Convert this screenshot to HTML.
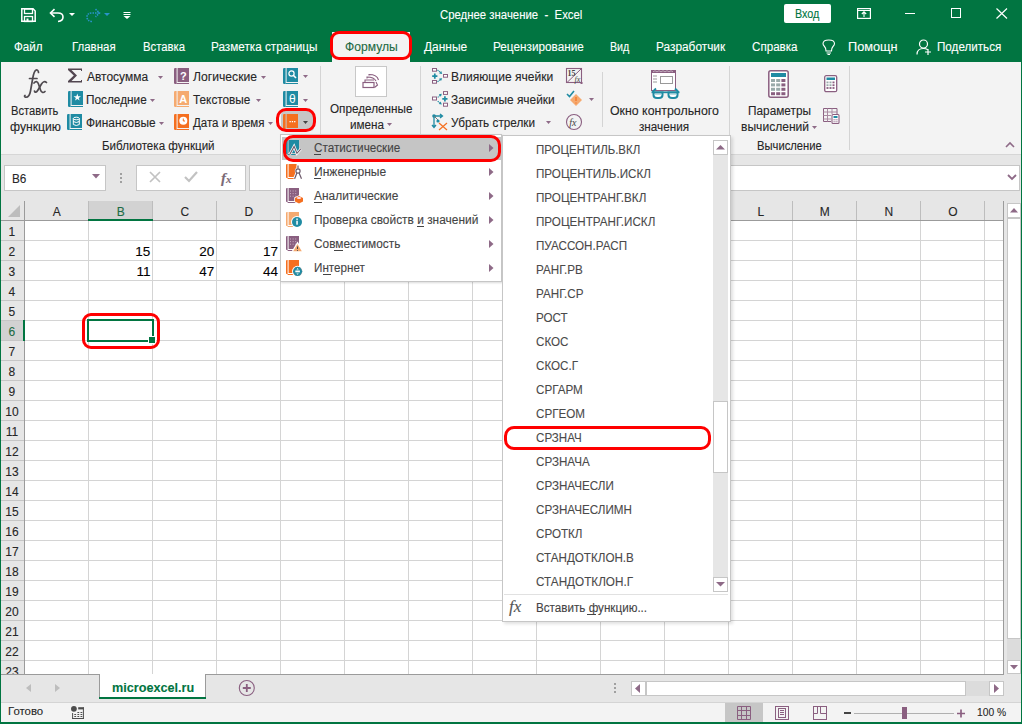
<!DOCTYPE html>
<html><head><meta charset="utf-8"><style>
html,body{margin:0;padding:0;width:1022px;height:724px;overflow:hidden;background:#fff;position:relative}
body{font-family:"Liberation Sans",sans-serif}
.t{position:absolute;white-space:pre;line-height:1;transform-origin:0 0;-webkit-text-stroke:0.1px currentColor}
</style></head><body>
<div style="position:absolute;left:0px;top:0px;width:1022px;height:62px;background:#017541"></div>
<div class="t" style="left:440.30px;top:9.04px;font-size:12px;color:#fff;transform:scaleX(0.9480);">Среднее значение  -  Excel</div>
<div style="position:absolute;left:784px;top:4px;width:47px;height:19px;background:#fff;border-radius:2px"></div>
<div class="t" style="left:795.40px;top:8.34px;font-size:12px;color:#017541;transform:scaleX(0.8989);">Вход</div>
<svg style="position:absolute;left:21px;top:8px;overflow:visible;" width="15" height="14" viewBox="0 0 15 14"><path d="M0.8,0.8 H12 L14.2,3 V13.2 H0.8Z" fill="none" stroke="#fff" stroke-width="1.5"/><rect x="3.5" y="1" width="8" height="4.5" fill="none" stroke="#fff" stroke-width="1.3"/><rect x="3.5" y="8.5" width="8" height="5" fill="none" stroke="#fff" stroke-width="1.3"/><rect x="5.5" y="10.5" width="2" height="2.5" fill="#fff"/></svg>
<svg style="position:absolute;left:49px;top:8px;overflow:visible;" width="16" height="14" viewBox="0 0 16 14"><path d="M2,5 H9 Q14,5 14,9 Q14,13 9,13.5" fill="none" stroke="#fff" stroke-width="1.6"/><path d="M5.5,1.2 L1.5,5 L5.5,8.8" fill="none" stroke="#fff" stroke-width="1.6"/></svg>
<svg style="position:absolute;left:69px;top:13px;overflow:visible;" width="6" height="3" viewBox="0 0 6 3"><path d="M0,0 H6 L3,3Z" fill="#fff"/></svg>
<svg style="position:absolute;left:85px;top:8px;overflow:visible;" width="16" height="14" viewBox="0 0 16 14"><path d="M14,5 H7 Q2,5 2,9 Q2,13 7,13.5" fill="none" stroke="#2a93c9" stroke-width="1.6" stroke-dasharray="1.5 1"/><path d="M10.5,1.2 L14.5,5 L10.5,8.8" fill="none" stroke="#2a93c9" stroke-width="1.6" stroke-dasharray="1.5 1"/></svg>
<svg style="position:absolute;left:104px;top:13px;overflow:visible;" width="6" height="3" viewBox="0 0 6 3"><path d="M0,0 H6 L3,3Z" fill="#2a93c9"/></svg>
<svg style="position:absolute;left:123px;top:11px;overflow:visible;" width="8" height="8" viewBox="0 0 8 8"><path d="M0.5,1.5 H7.5 M0.5,3.5 H7.5" stroke="#fff" stroke-width="1" fill="none"/><path d="M0.5,5 H7.5 L4,8Z" fill="#fff"/></svg>
<svg style="position:absolute;left:857px;top:8px;overflow:visible;" width="14" height="11" viewBox="0 0 14 11"><rect x="0.6" y="0.6" width="12.8" height="9.8" fill="none" stroke="#fff" stroke-width="1.2"/><path d="M0.6,2.5 H13.4" stroke="#fff" stroke-width="1"/><path d="M7,9 V4 M4.8,6 L7,3.8 L9.2,6" stroke="#fff" stroke-width="1.1" fill="none"/></svg>
<div style="position:absolute;left:905px;top:13px;width:10px;height:1px;background:#fff"></div>
<div style="position:absolute;left:951px;top:8px;width:10px;height:10px;border:1px solid #fff;box-sizing:border-box"></div>
<svg style="position:absolute;left:996px;top:8px;overflow:visible;" width="12" height="11" viewBox="0 0 12 11"><path d="M0.5,0.5 L11,10.5 M11,0.5 L0.5,10.5" stroke="#fff" stroke-width="1.2"/></svg>
<svg style="position:absolute;left:822px;top:39px;overflow:visible;" width="14" height="16" viewBox="0 0 14 16"><path d="M4,12 Q4,9 2.5,7.5 Q1,6 1,4.8 Q1,1 6.8,1 Q12.5,1 12.5,4.8 Q12.5,6 11,7.5 Q9.5,9 9.5,12Z M4.5,14 H9 M5.5,15.5 H8" fill="none" stroke="#fff" stroke-width="1.1"/></svg>
<svg style="position:absolute;left:916px;top:39px;overflow:visible;" width="17" height="16" viewBox="0 0 17 16"><circle cx="7.5" cy="5" r="4" fill="none" stroke="#fff" stroke-width="1.2"/><path d="M1,15.5 Q1,9.5 7.5,9.5 Q10,9.5 11.5,10.5 M12,10 V16 M9,13 H15" fill="none" stroke="#fff" stroke-width="1.2"/></svg>
<div class="t" style="left:14.00px;top:41.34px;font-size:12px;color:#fff;transform:scaleX(0.9692);">Файл</div>
<div class="t" style="left:72.20px;top:41.34px;font-size:12px;color:#fff;transform:scaleX(0.9546);">Главная</div>
<div class="t" style="left:143.00px;top:41.34px;font-size:12px;color:#fff;transform:scaleX(0.9414);">Вставка</div>
<div class="t" style="left:211.20px;top:41.34px;font-size:12px;color:#fff;transform:scaleX(0.9783);">Разметка страницы</div>
<div class="t" style="left:424.00px;top:41.34px;font-size:12px;color:#fff;transform:scaleX(0.9964);">Данные</div>
<div class="t" style="left:493.20px;top:41.34px;font-size:12px;color:#fff;transform:scaleX(0.9799);">Рецензирование</div>
<div class="t" style="left:610.30px;top:41.34px;font-size:12px;color:#fff;transform:scaleX(0.8891);">Вид</div>
<div class="t" style="left:656.20px;top:41.34px;font-size:12px;color:#fff;transform:scaleX(0.9880);">Разработчик</div>
<div class="t" style="left:752.40px;top:41.34px;font-size:12px;color:#fff;transform:scaleX(0.9684);">Справка</div>
<div class="t" style="left:848.20px;top:41.34px;font-size:12px;color:#fff;transform:scaleX(1.0615);">Помощн</div>
<div class="t" style="left:936.50px;top:41.34px;font-size:12px;color:#fff;transform:scaleX(0.9704);">Поделиться</div>
<div style="position:absolute;left:332px;top:32px;width:78px;height:30px;background:#f3f3f3"></div>
<div class="t" style="left:344.50px;top:41.34px;font-size:12px;color:#1d6a43;transform:scaleX(1.0110);">Формулы</div>
<div style="position:absolute;left:1px;top:62px;width:1020px;height:93px;background:#f3f3f3"></div>
<div style="position:absolute;left:1px;top:154px;width:1020px;height:48px;background:#e6e6e6"></div>
<div style="position:absolute;left:1px;top:154px;width:1020px;height:1px;background:#d6d6d6"></div>
<div class="t" style="left:11.30px;top:105.14px;font-size:12px;color:#262626;transform:scaleX(0.9299);">Вставить</div>
<div class="t" style="left:9.70px;top:120.84px;font-size:12px;color:#262626;transform:scaleX(1.0160);">функцию</div>
<div class="t" style="left:86.50px;top:70.84px;font-size:12px;color:#262626;transform:scaleX(0.9984);">Автосумма</div>
<div class="t" style="left:86.30px;top:93.84px;font-size:12px;color:#262626;transform:scaleX(0.9835);">Последние</div>
<div class="t" style="left:86.30px;top:116.84px;font-size:12px;color:#262626;transform:scaleX(0.9924);">Финансовые</div>
<div class="t" style="left:193.30px;top:70.84px;font-size:12px;color:#262626;transform:scaleX(1.0130);">Логические</div>
<div class="t" style="left:193.30px;top:93.84px;font-size:12px;color:#262626;transform:scaleX(0.9824);">Текстовые</div>
<div class="t" style="left:193.30px;top:116.84px;font-size:12px;color:#262626;transform:scaleX(0.9609);">Дата и время</div>
<div class="t" style="left:102.30px;top:140.14px;font-size:12px;color:#262626;transform:scaleX(0.9667);">Библиотека функций</div>
<div class="t" style="left:329.50px;top:102.54px;font-size:12px;color:#262626;transform:scaleX(0.9773);">Определенные</div>
<div class="t" style="left:349.50px;top:119.04px;font-size:12px;color:#262626;transform:scaleX(0.9758);">имена</div>
<div class="t" style="left:451.20px;top:70.84px;font-size:12px;color:#262626;transform:scaleX(1.0042);">Влияющие ячейки</div>
<div class="t" style="left:451.20px;top:93.84px;font-size:12px;color:#262626;transform:scaleX(0.9898);">Зависимые ячейки</div>
<div class="t" style="left:451.20px;top:116.84px;font-size:12px;color:#262626;transform:scaleX(0.9790);">Убрать стрелки</div>
<div class="t" style="left:609.60px;top:105.14px;font-size:12px;color:#262626;transform:scaleX(1.0290);">Окно контрольного</div>
<div class="t" style="left:639.00px;top:120.94px;font-size:12px;color:#262626;transform:scaleX(0.9749);">значения</div>
<div class="t" style="left:747.60px;top:105.14px;font-size:12px;color:#262626;transform:scaleX(0.9848);">Параметры</div>
<div class="t" style="left:740.50px;top:121.14px;font-size:12px;color:#262626;transform:scaleX(1.0064);">вычислений</div>
<div class="t" style="left:756.80px;top:140.14px;font-size:12px;color:#262626;transform:scaleX(0.9356);">Вычисление</div>
<svg style="position:absolute;left:22px;top:68px;overflow:visible;" width="28" height="32" viewBox="0 0 28 32"><g fill="none" stroke="#4f4a4f" stroke-width="1.7" stroke-linecap="round"><path d="M16.5,4.5 C16.5,2.5 15,1.5 13.8,2.2 C12,3.2 11.5,6 10.8,10 L8.5,23 C7.8,27 6,29.5 3.5,29.2 C2.5,29 2.2,28 3,27.5"/><path d="M7.5,10.5 H15"/><path d="M12,15 C13.5,13 15.5,13 16.5,16 L18.5,22 C19.5,25 21.5,25 23,23.5"/><path d="M24.5,14.5 C23,13 21,13.5 19.5,16 L16,22 C14.5,24.5 13,25 12.5,23"/></g></svg>
<svg style="position:absolute;left:67px;top:68px;overflow:visible;" width="16" height="15" viewBox="0 0 16 15"><path d="M1,0.5 H15 V3 H14 V2 H4.5 L10,7.5 L4.5,13 H14 V12 H15 V14.5 H1 V13 L6.8,7.5 L1,2Z" fill="#524650"/></svg>
<svg style="position:absolute;left:68px;top:91px;overflow:visible;" width="15" height="16" viewBox="0 0 15 16"><path d="M0,1.2 Q0,0 1.2,0 H2.6 V16 H1.2 Q0,16 0,14.8Z" fill="#1f8ba3"/><rect x="3.6" y="0" width="11.4" height="14" fill="#1f8ba3"/><rect x="2.6" y="15" width="12.4" height="1" fill="#1f8ba3"/><path d="M9.3,2.6 L10.2,5.3 H13 L10.7,6.9 L11.6,9.6 L9.3,8 L7,9.6 L7.9,6.9 L5.6,5.3 H8.4Z" fill="#fff"/></svg>
<svg style="position:absolute;left:67px;top:114px;overflow:visible;" width="15" height="16" viewBox="0 0 15 16"><path d="M0,1.2 Q0,0 1.2,0 H2.6 V16 H1.2 Q0,16 0,14.8Z" fill="#1f8ba3"/><rect x="3.6" y="0" width="11.4" height="14" fill="#1f8ba3"/><rect x="2.6" y="15" width="12.4" height="1" fill="#1f8ba3"/><ellipse cx="9.3" cy="4.5" rx="3" ry="1.3" fill="none" stroke="#fff" stroke-width="1"/><path d="M6.3,4.5 V10.5 Q9.3,12.5 12.3,10.5 V4.5 M6.3,7.5 Q9.3,9.5 12.3,7.5" fill="none" stroke="#fff" stroke-width="1"/></svg>
<svg style="position:absolute;left:174px;top:68px;overflow:visible;" width="15" height="16" viewBox="0 0 15 16"><path d="M0,1.2 Q0,0 1.2,0 H2.6 V16 H1.2 Q0,16 0,14.8Z" fill="#8a5f80"/><rect x="3.6" y="0" width="11.4" height="14" fill="#8a5f80"/><rect x="2.6" y="15" width="12.4" height="1" fill="#8a5f80"/><text x="9.3" y="11.5" font-family="Liberation Sans" font-weight="bold" font-size="11" fill="#fff" text-anchor="middle">?</text></svg>
<svg style="position:absolute;left:174px;top:91px;overflow:visible;" width="15" height="16" viewBox="0 0 15 16"><path d="M0,1.2 Q0,0 1.2,0 H2.6 V16 H1.2 Q0,16 0,14.8Z" fill="#f5aa70"/><rect x="3.6" y="0" width="11.4" height="14" fill="#f5aa70"/><rect x="2.6" y="15" width="12.4" height="1" fill="#f5aa70"/><text x="9.3" y="11.5" font-family="Liberation Sans" font-weight="bold" font-size="11" fill="#fff" text-anchor="middle">A</text></svg>
<svg style="position:absolute;left:174px;top:114px;overflow:visible;" width="15" height="16" viewBox="0 0 15 16"><path d="M0,1.2 Q0,0 1.2,0 H2.6 V16 H1.2 Q0,16 0,14.8Z" fill="#f56f1f"/><rect x="3.6" y="0" width="11.4" height="14" fill="#f56f1f"/><rect x="2.6" y="15" width="12.4" height="1" fill="#f56f1f"/><circle cx="9.3" cy="6.8" r="4" fill="#fff"/><path d="M9.3,4.5 V7 H11" stroke="#f56f1f" stroke-width="1" fill="none"/></svg>
<svg style="position:absolute;left:283px;top:68px;overflow:visible;" width="15" height="16" viewBox="0 0 15 16"><path d="M0,1.2 Q0,0 1.2,0 H2.6 V16 H1.2 Q0,16 0,14.8Z" fill="#1f8ba3"/><rect x="3.6" y="0" width="11.4" height="14" fill="#1f8ba3"/><rect x="2.6" y="15" width="12.4" height="1" fill="#1f8ba3"/><circle cx="8.5" cy="5.5" r="2.6" fill="none" stroke="#fff" stroke-width="1.2"/><path d="M10.3,7.3 L13,10" stroke="#fff" stroke-width="1.6"/></svg>
<svg style="position:absolute;left:283px;top:91px;overflow:visible;" width="15" height="16" viewBox="0 0 15 16"><path d="M0,1.2 Q0,0 1.2,0 H2.6 V16 H1.2 Q0,16 0,14.8Z" fill="#1f8ba3"/><rect x="3.6" y="0" width="11.4" height="14" fill="#1f8ba3"/><rect x="2.6" y="15" width="12.4" height="1" fill="#1f8ba3"/><text x="9.3" y="11.8" font-family="Liberation Sans" font-size="12" fill="#fff" text-anchor="middle">θ</text></svg>
<div style="position:absolute;left:281px;top:111px;width:33px;height:20px;background:#c6c6c6;border-radius:4px"></div>
<svg style="position:absolute;left:283px;top:114px;overflow:visible;" width="15" height="16" viewBox="0 0 15 16"><path d="M0,1.2 Q0,0 1.2,0 H2.6 V16 H1.2 Q0,16 0,14.8Z" fill="#f56f1f"/><rect x="3.6" y="0" width="11.4" height="14" fill="#f56f1f"/><rect x="2.6" y="15" width="12.4" height="1" fill="#f56f1f"/><rect x="6.5" y="7" width="1.3" height="1.3" fill="#fff"/><rect x="8.8" y="7" width="1.3" height="1.3" fill="#fff"/><rect x="11.1" y="7" width="1.3" height="1.3" fill="#fff"/></svg>
<svg style="position:absolute;left:158.0px;top:75.5px;overflow:visible;" width="5" height="3.0" viewBox="0 0 5 3.0"><path d="M0,0 H5 L2.5,3.0Z" fill="#8e6a87"/></svg>
<svg style="position:absolute;left:150.0px;top:98.5px;overflow:visible;" width="5" height="3.0" viewBox="0 0 5 3.0"><path d="M0,0 H5 L2.5,3.0Z" fill="#8e6a87"/></svg>
<svg style="position:absolute;left:159.0px;top:121.5px;overflow:visible;" width="5" height="3.0" viewBox="0 0 5 3.0"><path d="M0,0 H5 L2.5,3.0Z" fill="#8e6a87"/></svg>
<svg style="position:absolute;left:260.5px;top:75.5px;overflow:visible;" width="5" height="3.0" viewBox="0 0 5 3.0"><path d="M0,0 H5 L2.5,3.0Z" fill="#8e6a87"/></svg>
<svg style="position:absolute;left:255.5px;top:98.5px;overflow:visible;" width="5" height="3.0" viewBox="0 0 5 3.0"><path d="M0,0 H5 L2.5,3.0Z" fill="#8e6a87"/></svg>
<svg style="position:absolute;left:268.0px;top:121.5px;overflow:visible;" width="5" height="3.0" viewBox="0 0 5 3.0"><path d="M0,0 H5 L2.5,3.0Z" fill="#8e6a87"/></svg>
<svg style="position:absolute;left:303.0px;top:75.0px;overflow:visible;" width="5" height="3.0" viewBox="0 0 5 3.0"><path d="M0,0 H5 L2.5,3.0Z" fill="#8e6a87"/></svg>
<svg style="position:absolute;left:303.0px;top:98.5px;overflow:visible;" width="5" height="3.0" viewBox="0 0 5 3.0"><path d="M0,0 H5 L2.5,3.0Z" fill="#8e6a87"/></svg>
<svg style="position:absolute;left:303.0px;top:121.0px;overflow:visible;" width="5" height="3.0" viewBox="0 0 5 3.0"><path d="M0,0 H5 L2.5,3.0Z" fill="#444"/></svg>
<div style="position:absolute;left:355px;top:66px;width:32px;height:31px;background:#fff;border:1px solid #c8c8c8;box-sizing:border-box"></div>
<svg style="position:absolute;left:362px;top:73px;overflow:visible;" width="18" height="16" viewBox="0 0 18 16"><rect x="1" y="9.5" width="11" height="5" fill="none" stroke="#8a5f80" stroke-width="1.2"/><path d="M3,9 V7 H12 M5,5.5 V4 Q12,4 14,8 M7,2.5 V1.5 Q15,1.5 16.5,7 M14,9 L15.5,12 L12.5,14.5" fill="none" stroke="#8a5f80" stroke-width="1.1"/></svg>
<svg style="position:absolute;left:387.2px;top:122.5px;overflow:visible;" width="5" height="3.0" viewBox="0 0 5 3.0"><path d="M0,0 H5 L2.5,3.0Z" fill="#8e6a87"/></svg>
<svg style="position:absolute;left:431px;top:68px;overflow:visible;" width="18" height="16" viewBox="0 0 18 16"><rect x="1.5" y="0.5" width="4" height="2.7" fill="#fff" stroke="#8a5f80" stroke-width="1"/><rect x="1.5" y="12.5" width="4" height="2.7" fill="#fff" stroke="#8a5f80" stroke-width="1"/><rect x="12.5" y="6.5" width="4" height="2.7" fill="#fff" stroke="#8a5f80" stroke-width="1"/><path d="M1.1999999999999997,8.1 H6.4 M3.8,5.5 V10.7" stroke="#1f8ba3" stroke-width="1.7"/><path d="M6.5,2 L9.20,4.24" stroke="#1f8ba3" stroke-width="1.1" stroke-dasharray="1.3 0.7"/><path d="M11.2,5.9 L8.18,5.47 L10.22,3.01Z" fill="#1f8ba3"/><path d="M6.5,13.7 L9.09,11.82" stroke="#1f8ba3" stroke-width="1.1" stroke-dasharray="1.3 0.7"/><path d="M11.2,10.3 L10.03,13.12 L8.16,10.53Z" fill="#1f8ba3"/></svg>
<svg style="position:absolute;left:431px;top:91px;overflow:visible;" width="18" height="17" viewBox="0 0 18 17"><rect x="1.5" y="6" width="4" height="3" fill="#fff" stroke="#8a5f80" stroke-width="1"/><rect x="12.5" y="0.6" width="4" height="2.8" fill="#fff" stroke="#8a5f80" stroke-width="1"/><rect x="12.5" y="12.2" width="4" height="3" fill="#fff" stroke="#8a5f80" stroke-width="1"/><path d="M11.3,7.8 H16.5 M13.9,5.199999999999999 V10.4" stroke="#1f8ba3" stroke-width="1.7"/><path d="M6.7,6.4 L8.85,4.52" stroke="#1f8ba3" stroke-width="1.1" stroke-dasharray="1.3 0.7"/><path d="M10.8,2.8 L9.90,5.72 L7.79,3.31Z" fill="#1f8ba3"/><path d="M6.7,10.2 L8.75,11.80" stroke="#1f8ba3" stroke-width="1.1" stroke-dasharray="1.3 0.7"/><path d="M10.8,13.4 L7.77,13.06 L9.73,10.54Z" fill="#1f8ba3"/></svg>
<svg style="position:absolute;left:431px;top:113px;overflow:visible;" width="18" height="18" viewBox="0 0 18 18"><circle cx="3" cy="3" r="1.8" fill="#1f8ba3"/><path d="M3,3 H11 M9,1 L11.5,3 L9,5 M3,3 V14 M1,12 L3,14.5 L5,12" stroke="#1f8ba3" stroke-width="1.3" fill="none"/><path d="M3,3 L7,7" stroke="#777" stroke-width="1"/><circle cx="7" cy="8" r="1.6" fill="#1f8ba3"/><path d="M8,10 L16,17 M16,10 L8,17" stroke="#f56f1f" stroke-width="1.2"/></svg>
<svg style="position:absolute;left:546.0px;top:120.5px;overflow:visible;" width="5" height="3.0" viewBox="0 0 5 3.0"><path d="M0,0 H5 L2.5,3.0Z" fill="#8e6a87"/></svg>
<svg style="position:absolute;left:566px;top:68px;overflow:visible;" width="17" height="17" viewBox="0 0 17 17"><rect x="0.5" y="0.5" width="15" height="14" fill="none" stroke="#8a5f80" stroke-width="1.1"/><path d="M15,1 L1,14.5" stroke="#8a5f80" stroke-width="1"/><text x="1.5" y="8" font-family="Liberation Serif" font-weight="bold" font-size="8" fill="#444">15</text><text x="8.5" y="13.5" font-family="Liberation Serif" font-style="italic" font-size="8" fill="#444">fx</text><rect x="14.5" y="14" width="2" height="2" fill="#8a5f80"/></svg>
<svg style="position:absolute;left:566px;top:90px;overflow:visible;" width="17" height="17" viewBox="0 0 17 17"><path d="M1,4 L3.5,6.5 L8,1" stroke="#1f8ba3" stroke-width="1.6" fill="none"/><path d="M10,4 L16,10 L10,16 L4,10Z" fill="#f5aa70"/><path d="M10,7 V11 M10,12.5 V13.5" stroke="#f56f1f" stroke-width="1.2"/></svg>
<svg style="position:absolute;left:588.5px;top:98.0px;overflow:visible;" width="5" height="3.0" viewBox="0 0 5 3.0"><path d="M0,0 H5 L2.5,3.0Z" fill="#8e6a87"/></svg>
<svg style="position:absolute;left:566px;top:114px;overflow:visible;" width="17" height="17" viewBox="0 0 17 17"><circle cx="8" cy="8" r="7.5" fill="none" stroke="#8a5f80" stroke-width="1.1"/><text x="3.2" y="11.8" font-family="Liberation Serif" font-style="italic" font-size="10" fill="#444">fx</text></svg>
<svg style="position:absolute;left:651px;top:70px;overflow:visible;" width="30" height="30" viewBox="0 0 30 30"><rect x="0.5" y="0.5" width="24" height="20" fill="#fff" stroke="#8a5f80" stroke-width="1"/><rect x="0" y="0" width="25" height="3" fill="#8a5f80"/><path d="M2,1.8 L4,0.8 L6,1.8 L8,0.8 L10,1.8 L12,0.8 L14,1.8 L16,0.8 L18,1.8 L20,0.8 L22,1.8" stroke="#d9c9d4" stroke-width="0.7" fill="none"/><path d="M2,6 H6 M2,9 H6 M2,12 H6" stroke="#999" stroke-width="1"/><rect x="9.5" y="6.5" width="12" height="7" fill="none" stroke="#999" stroke-width="1"/><path d="M1.5,22 L5,18.5 M27.5,22 L24,18.5" stroke="#1f8ba3" stroke-width="1.8" fill="none"/><path d="M0.5,22.3 H28.5" stroke="#1f8ba3" stroke-width="1.8"/><path d="M1.5,21.5 H12.5 V25 Q12.5,29 8,29 H6 Q1.5,29 1.5,25Z M16.5,21.5 H27.5 V25 Q27.5,29 23,29 H21 Q16.5,29 16.5,25Z" fill="#1f8ba3"/><path d="M3.5,23.5 H10.5 V25 Q10.5,27 8,27 H6 Q3.5,27 3.5,25Z M18.5,23.5 H25.5 V25 Q25.5,27 23,27 H21 Q18.5,27 18.5,25Z" fill="#fff"/><path d="M4.5,24.5 H9.5 M19.5,24.5 H24.5" stroke="#1f8ba3" stroke-width="0.6" stroke-dasharray="1 1"/></svg>
<svg style="position:absolute;left:768px;top:70px;overflow:visible;" width="22" height="28" viewBox="0 0 22 28"><rect x="0.8" y="0.8" width="19.4" height="26.4" rx="2" fill="#fff" stroke="#8a5f80" stroke-width="1.5"/><rect x="3" y="3" width="15" height="4" fill="#1f8ba3"/><rect x="3.0" y="9.0" width="4" height="3" fill="#9aa"/><rect x="3.0" y="13.4" width="4" height="3" fill="#9aa"/><rect x="3.0" y="17.8" width="4" height="3" fill="#9aa"/><rect x="3.0" y="22.200000000000003" width="4" height="3" fill="#8a5f80"/><rect x="8.2" y="9.0" width="4" height="3" fill="#9aa"/><rect x="8.2" y="13.4" width="4" height="3" fill="#9aa"/><rect x="8.2" y="17.8" width="4" height="3" fill="#9aa"/><rect x="8.2" y="22.200000000000003" width="4" height="3" fill="#8a5f80"/><rect x="13.4" y="9.0" width="4" height="3" fill="#8a5f80"/><rect x="13.4" y="13.4" width="4" height="3" fill="#8a5f80"/><rect x="13.4" y="17.8" width="4" height="3" fill="#8a5f80"/><rect x="13.4" y="22.200000000000003" width="4" height="3" fill="#8a5f80"/></svg>
<svg style="position:absolute;left:824px;top:75px;overflow:visible;" width="14" height="18" viewBox="0 0 14 18"><rect x="0.7" y="0.7" width="12" height="16" rx="1.5" fill="#fff" stroke="#8a5f80" stroke-width="1.3"/><rect x="2.5" y="2.5" width="8.5" height="2.5" fill="#1f8ba3"/><rect x="2.5" y="6.5" width="2" height="1.8" fill="#9aa"/><rect x="2.5" y="9.3" width="2" height="1.8" fill="#9aa"/><rect x="2.5" y="12.1" width="2" height="1.8" fill="#8a5f80"/><rect x="5.5" y="6.5" width="2" height="1.8" fill="#9aa"/><rect x="5.5" y="9.3" width="2" height="1.8" fill="#9aa"/><rect x="5.5" y="12.1" width="2" height="1.8" fill="#8a5f80"/><rect x="8.5" y="6.5" width="2" height="1.8" fill="#8a5f80"/><rect x="8.5" y="9.3" width="2" height="1.8" fill="#8a5f80"/><rect x="8.5" y="12.1" width="2" height="1.8" fill="#8a5f80"/></svg>
<svg style="position:absolute;left:823px;top:108px;overflow:visible;" width="17" height="16" viewBox="0 0 17 16"><path d="M0.5,0.5 H14 V6 M0.5,0.5 V13.5 H8" fill="none" stroke="#8a5f80" stroke-width="1"/><path d="M0.5,4 H14 M0.5,7.5 H8 M0.5,11 H8 M4.5,0.5 V13.5 M9,0.5 V6" stroke="#a98aa1" stroke-width="1"/><rect x="9" y="6.5" width="7" height="9" rx="1" fill="#fff" stroke="#8a5f80" stroke-width="1.1"/><rect x="10.5" y="8" width="4" height="2" fill="#1f8ba3"/><path d="M10.5,11.8 H15 M10.5,13.8 H15" stroke="#8a5f80" stroke-width="1" stroke-dasharray="1.2 0.8"/></svg>
<svg style="position:absolute;left:812.1px;top:125.5px;overflow:visible;" width="5" height="3.0" viewBox="0 0 5 3.0"><path d="M0,0 H5 L2.5,3.0Z" fill="#8e6a87"/></svg>
<svg style="position:absolute;left:1005px;top:142px;overflow:visible;" width="10" height="6" viewBox="0 0 10 6"><path d="M1,5 L5,1 L9,5" stroke="#8e6a87" stroke-width="1.6" fill="none"/></svg>
<div style="position:absolute;left:320px;top:66px;width:1px;height:84px;background:#d4d4d4"></div>
<div style="position:absolute;left:420px;top:66px;width:1px;height:84px;background:#d4d4d4"></div>
<div style="position:absolute;left:602px;top:72px;width:1px;height:55px;background:#d4d4d4"></div>
<div style="position:absolute;left:729px;top:66px;width:1px;height:84px;background:#d4d4d4"></div>
<div style="position:absolute;left:849px;top:66px;width:1px;height:84px;background:#d4d4d4"></div>
<div style="position:absolute;left:4px;top:165px;width:102px;height:26px;background:#fff;border:1px solid #c6c6c6;box-sizing:border-box"></div>
<div class="t" style="left:11.60px;top:173.34px;font-size:12px;color:#262626;transform:scaleX(0.9812);">B6</div>
<div style="position:absolute;left:136px;top:165px;width:110px;height:26px;background:#fff;border:1px solid #c6c6c6;box-sizing:border-box"></div>
<div style="position:absolute;left:249px;top:165px;width:771px;height:26px;background:#fff;border:1px solid #c6c6c6;box-sizing:border-box"></div>
<div style="position:absolute;left:1px;top:201px;width:1003px;height:19px;background:#e6e6e6"></div>
<div style="position:absolute;left:25px;top:220px;width:979px;height:454px;background:#fff"></div>
<div style="position:absolute;left:1px;top:220px;width:24px;height:454px;background:#e6e6e6"></div>
<div style="position:absolute;left:89px;top:201px;width:64px;height:18px;background:#d2d2d2"></div>
<div style="position:absolute;left:1px;top:321px;width:23px;height:19px;background:#d2d2d2"></div>
<div style="position:absolute;left:88px;top:201px;width:1px;height:19px;background:#bdbdbd"></div>
<div style="position:absolute;left:88px;top:220px;width:1px;height:454px;background:#d4d4d4"></div>
<div style="position:absolute;left:152px;top:201px;width:1px;height:19px;background:#bdbdbd"></div>
<div style="position:absolute;left:152px;top:220px;width:1px;height:454px;background:#d4d4d4"></div>
<div style="position:absolute;left:216px;top:201px;width:1px;height:19px;background:#bdbdbd"></div>
<div style="position:absolute;left:216px;top:220px;width:1px;height:454px;background:#d4d4d4"></div>
<div style="position:absolute;left:280px;top:201px;width:1px;height:19px;background:#bdbdbd"></div>
<div style="position:absolute;left:280px;top:220px;width:1px;height:454px;background:#d4d4d4"></div>
<div style="position:absolute;left:344px;top:201px;width:1px;height:19px;background:#bdbdbd"></div>
<div style="position:absolute;left:344px;top:220px;width:1px;height:454px;background:#d4d4d4"></div>
<div style="position:absolute;left:408px;top:201px;width:1px;height:19px;background:#bdbdbd"></div>
<div style="position:absolute;left:408px;top:220px;width:1px;height:454px;background:#d4d4d4"></div>
<div style="position:absolute;left:472px;top:201px;width:1px;height:19px;background:#bdbdbd"></div>
<div style="position:absolute;left:472px;top:220px;width:1px;height:454px;background:#d4d4d4"></div>
<div style="position:absolute;left:536px;top:201px;width:1px;height:19px;background:#bdbdbd"></div>
<div style="position:absolute;left:536px;top:220px;width:1px;height:454px;background:#d4d4d4"></div>
<div style="position:absolute;left:600px;top:201px;width:1px;height:19px;background:#bdbdbd"></div>
<div style="position:absolute;left:600px;top:220px;width:1px;height:454px;background:#d4d4d4"></div>
<div style="position:absolute;left:664px;top:201px;width:1px;height:19px;background:#bdbdbd"></div>
<div style="position:absolute;left:664px;top:220px;width:1px;height:454px;background:#d4d4d4"></div>
<div style="position:absolute;left:728px;top:201px;width:1px;height:19px;background:#bdbdbd"></div>
<div style="position:absolute;left:728px;top:220px;width:1px;height:454px;background:#d4d4d4"></div>
<div style="position:absolute;left:792px;top:201px;width:1px;height:19px;background:#bdbdbd"></div>
<div style="position:absolute;left:792px;top:220px;width:1px;height:454px;background:#d4d4d4"></div>
<div style="position:absolute;left:856px;top:201px;width:1px;height:19px;background:#bdbdbd"></div>
<div style="position:absolute;left:856px;top:220px;width:1px;height:454px;background:#d4d4d4"></div>
<div style="position:absolute;left:920px;top:201px;width:1px;height:19px;background:#bdbdbd"></div>
<div style="position:absolute;left:920px;top:220px;width:1px;height:454px;background:#d4d4d4"></div>
<div style="position:absolute;left:984px;top:201px;width:1px;height:19px;background:#bdbdbd"></div>
<div style="position:absolute;left:984px;top:220px;width:1px;height:454px;background:#d4d4d4"></div>
<div style="position:absolute;left:1px;top:240px;width:23px;height:1px;background:#c6c6c6"></div>
<div style="position:absolute;left:25px;top:240px;width:979px;height:1px;background:#d4d4d4"></div>
<div style="position:absolute;left:1px;top:260px;width:23px;height:1px;background:#c6c6c6"></div>
<div style="position:absolute;left:25px;top:260px;width:979px;height:1px;background:#d4d4d4"></div>
<div style="position:absolute;left:1px;top:280px;width:23px;height:1px;background:#c6c6c6"></div>
<div style="position:absolute;left:25px;top:280px;width:979px;height:1px;background:#d4d4d4"></div>
<div style="position:absolute;left:1px;top:300px;width:23px;height:1px;background:#c6c6c6"></div>
<div style="position:absolute;left:25px;top:300px;width:979px;height:1px;background:#d4d4d4"></div>
<div style="position:absolute;left:1px;top:320px;width:23px;height:1px;background:#c6c6c6"></div>
<div style="position:absolute;left:25px;top:320px;width:979px;height:1px;background:#d4d4d4"></div>
<div style="position:absolute;left:1px;top:340px;width:23px;height:1px;background:#c6c6c6"></div>
<div style="position:absolute;left:25px;top:340px;width:979px;height:1px;background:#d4d4d4"></div>
<div style="position:absolute;left:1px;top:360px;width:23px;height:1px;background:#c6c6c6"></div>
<div style="position:absolute;left:25px;top:360px;width:979px;height:1px;background:#d4d4d4"></div>
<div style="position:absolute;left:1px;top:380px;width:23px;height:1px;background:#c6c6c6"></div>
<div style="position:absolute;left:25px;top:380px;width:979px;height:1px;background:#d4d4d4"></div>
<div style="position:absolute;left:1px;top:400px;width:23px;height:1px;background:#c6c6c6"></div>
<div style="position:absolute;left:25px;top:400px;width:979px;height:1px;background:#d4d4d4"></div>
<div style="position:absolute;left:1px;top:420px;width:23px;height:1px;background:#c6c6c6"></div>
<div style="position:absolute;left:25px;top:420px;width:979px;height:1px;background:#d4d4d4"></div>
<div style="position:absolute;left:1px;top:440px;width:23px;height:1px;background:#c6c6c6"></div>
<div style="position:absolute;left:25px;top:440px;width:979px;height:1px;background:#d4d4d4"></div>
<div style="position:absolute;left:1px;top:460px;width:23px;height:1px;background:#c6c6c6"></div>
<div style="position:absolute;left:25px;top:460px;width:979px;height:1px;background:#d4d4d4"></div>
<div style="position:absolute;left:1px;top:480px;width:23px;height:1px;background:#c6c6c6"></div>
<div style="position:absolute;left:25px;top:480px;width:979px;height:1px;background:#d4d4d4"></div>
<div style="position:absolute;left:1px;top:500px;width:23px;height:1px;background:#c6c6c6"></div>
<div style="position:absolute;left:25px;top:500px;width:979px;height:1px;background:#d4d4d4"></div>
<div style="position:absolute;left:1px;top:520px;width:23px;height:1px;background:#c6c6c6"></div>
<div style="position:absolute;left:25px;top:520px;width:979px;height:1px;background:#d4d4d4"></div>
<div style="position:absolute;left:1px;top:540px;width:23px;height:1px;background:#c6c6c6"></div>
<div style="position:absolute;left:25px;top:540px;width:979px;height:1px;background:#d4d4d4"></div>
<div style="position:absolute;left:1px;top:560px;width:23px;height:1px;background:#c6c6c6"></div>
<div style="position:absolute;left:25px;top:560px;width:979px;height:1px;background:#d4d4d4"></div>
<div style="position:absolute;left:1px;top:580px;width:23px;height:1px;background:#c6c6c6"></div>
<div style="position:absolute;left:25px;top:580px;width:979px;height:1px;background:#d4d4d4"></div>
<div style="position:absolute;left:1px;top:600px;width:23px;height:1px;background:#c6c6c6"></div>
<div style="position:absolute;left:25px;top:600px;width:979px;height:1px;background:#d4d4d4"></div>
<div style="position:absolute;left:1px;top:620px;width:23px;height:1px;background:#c6c6c6"></div>
<div style="position:absolute;left:25px;top:620px;width:979px;height:1px;background:#d4d4d4"></div>
<div style="position:absolute;left:1px;top:640px;width:23px;height:1px;background:#c6c6c6"></div>
<div style="position:absolute;left:25px;top:640px;width:979px;height:1px;background:#d4d4d4"></div>
<div style="position:absolute;left:1px;top:660px;width:23px;height:1px;background:#c6c6c6"></div>
<div style="position:absolute;left:25px;top:660px;width:979px;height:1px;background:#d4d4d4"></div>
<div style="position:absolute;left:1px;top:680px;width:23px;height:1px;background:#c6c6c6"></div>
<div style="position:absolute;left:25px;top:680px;width:979px;height:1px;background:#d4d4d4"></div>
<div style="position:absolute;left:1px;top:220px;width:1003px;height:1px;background:#9b9b9b"></div>
<div style="position:absolute;left:24px;top:201px;width:1px;height:473px;background:#9b9b9b"></div>
<div style="position:absolute;left:88px;top:219px;width:65px;height:2px;background:#017541"></div>
<div style="position:absolute;left:23px;top:320px;width:2px;height:21px;background:#017541"></div>
<div class="t" style="left:36.8px;top:205.84px;width:40px;text-align:center;font-size:12px;color:#262626">A</div>
<div class="t" style="left:100.8px;top:205.84px;width:40px;text-align:center;font-size:12px;color:#1d6b43">B</div>
<div class="t" style="left:164.8px;top:205.84px;width:40px;text-align:center;font-size:12px;color:#262626">C</div>
<div class="t" style="left:228.8px;top:205.84px;width:40px;text-align:center;font-size:12px;color:#262626">D</div>
<div class="t" style="left:292.8px;top:205.84px;width:40px;text-align:center;font-size:12px;color:#262626">E</div>
<div class="t" style="left:356.8px;top:205.84px;width:40px;text-align:center;font-size:12px;color:#262626">F</div>
<div class="t" style="left:420.8px;top:205.84px;width:40px;text-align:center;font-size:12px;color:#262626">G</div>
<div class="t" style="left:484.8px;top:205.84px;width:40px;text-align:center;font-size:12px;color:#262626">H</div>
<div class="t" style="left:548.8px;top:205.84px;width:40px;text-align:center;font-size:12px;color:#262626">I</div>
<div class="t" style="left:612.8px;top:205.84px;width:40px;text-align:center;font-size:12px;color:#262626">J</div>
<div class="t" style="left:676.8px;top:205.84px;width:40px;text-align:center;font-size:12px;color:#262626">K</div>
<div class="t" style="left:740.8px;top:205.84px;width:40px;text-align:center;font-size:12px;color:#262626">L</div>
<div class="t" style="left:804.8px;top:205.84px;width:40px;text-align:center;font-size:12px;color:#262626">M</div>
<div class="t" style="left:868.8px;top:205.84px;width:40px;text-align:center;font-size:12px;color:#262626">N</div>
<div class="t" style="left:932.8px;top:205.84px;width:40px;text-align:center;font-size:12px;color:#262626">O</div>
<div class="t" style="left:0.4px;width:23px;text-align:center;top:225.64px;font-size:12px;color:#262626">1</div>
<div class="t" style="left:0.4px;width:23px;text-align:center;top:245.64px;font-size:12px;color:#262626">2</div>
<div class="t" style="left:0.4px;width:23px;text-align:center;top:265.64px;font-size:12px;color:#262626">3</div>
<div class="t" style="left:0.4px;width:23px;text-align:center;top:285.64px;font-size:12px;color:#262626">4</div>
<div class="t" style="left:0.4px;width:23px;text-align:center;top:305.64px;font-size:12px;color:#262626">5</div>
<div class="t" style="left:0.4px;width:23px;text-align:center;top:325.64px;font-size:12px;color:#1d6b43">6</div>
<div class="t" style="left:0.4px;width:23px;text-align:center;top:345.64px;font-size:12px;color:#262626">7</div>
<div class="t" style="left:0.4px;width:23px;text-align:center;top:365.64px;font-size:12px;color:#262626">8</div>
<div class="t" style="left:0.4px;width:23px;text-align:center;top:385.64px;font-size:12px;color:#262626">9</div>
<div class="t" style="left:0.4px;width:23px;text-align:center;top:405.64px;font-size:12px;color:#262626">10</div>
<div class="t" style="left:0.4px;width:23px;text-align:center;top:425.64px;font-size:12px;color:#262626">11</div>
<div class="t" style="left:0.4px;width:23px;text-align:center;top:445.64px;font-size:12px;color:#262626">12</div>
<div class="t" style="left:0.4px;width:23px;text-align:center;top:465.64px;font-size:12px;color:#262626">13</div>
<div class="t" style="left:0.4px;width:23px;text-align:center;top:485.64px;font-size:12px;color:#262626">14</div>
<div class="t" style="left:0.4px;width:23px;text-align:center;top:505.64px;font-size:12px;color:#262626">15</div>
<div class="t" style="left:0.4px;width:23px;text-align:center;top:525.64px;font-size:12px;color:#262626">16</div>
<div class="t" style="left:0.4px;width:23px;text-align:center;top:545.64px;font-size:12px;color:#262626">17</div>
<div class="t" style="left:0.4px;width:23px;text-align:center;top:565.64px;font-size:12px;color:#262626">18</div>
<div class="t" style="left:0.4px;width:23px;text-align:center;top:585.64px;font-size:12px;color:#262626">19</div>
<div class="t" style="left:0.4px;width:23px;text-align:center;top:605.64px;font-size:12px;color:#262626">20</div>
<div class="t" style="left:0.4px;width:23px;text-align:center;top:625.64px;font-size:12px;color:#262626">21</div>
<div class="t" style="left:0.4px;width:23px;text-align:center;top:645.64px;font-size:12px;color:#262626">22</div>
<div class="t" style="left:0.4px;width:23px;text-align:center;top:665.64px;font-size:12px;color:#262626">23</div>
<svg style="position:absolute;left:8px;top:205px;overflow:visible;" width="13" height="13" viewBox="0 0 13 13"><path d="M12,0 V12 H0Z" fill="#bdbdbd"/></svg>
<div class="t" style="left:110.4px;top:244.57px;width:40px;text-align:right;font-size:13.5px;color:#000">15</div>
<div class="t" style="left:174.2px;top:244.57px;width:40px;text-align:right;font-size:13.5px;color:#000">20</div>
<div class="t" style="left:238px;top:244.57px;width:40px;text-align:right;font-size:13.5px;color:#000">17</div>
<div class="t" style="left:110.4px;top:264.57px;width:40px;text-align:right;font-size:13.5px;color:#000">11</div>
<div class="t" style="left:174.2px;top:264.57px;width:40px;text-align:right;font-size:13.5px;color:#000">47</div>
<div class="t" style="left:238px;top:264.57px;width:40px;text-align:right;font-size:13.5px;color:#000">44</div>
<div style="position:absolute;left:87px;top:319px;width:67px;height:23px;border:2px solid #017541;box-sizing:border-box"></div>
<div style="position:absolute;left:148px;top:336px;width:8px;height:8px;background:#017541;border:1px solid #fff;box-sizing:border-box"></div>
<svg style="position:absolute;left:92.0px;top:173.75px;overflow:visible;" width="8" height="4.5" viewBox="0 0 8 4.5"><path d="M0,0 H8 L4.0,4.5Z" fill="#8e6a87"/></svg>
<div style="position:absolute;left:120px;top:173px;width:2px;height:2px;background:#a0a0a0"></div>
<div style="position:absolute;left:120px;top:177px;width:2px;height:2px;background:#a0a0a0"></div>
<div style="position:absolute;left:120px;top:181px;width:2px;height:2px;background:#a0a0a0"></div>
<svg style="position:absolute;left:149px;top:171px;overflow:visible;" width="12" height="12" viewBox="0 0 12 12"><path d="M1,1 L11,11 M11,1 L1,11" stroke="#c2c2c2" stroke-width="1.7"/></svg>
<svg style="position:absolute;left:184px;top:171px;overflow:visible;" width="14" height="12" viewBox="0 0 14 12"><path d="M1,6 L5,10 L13,1" stroke="#c2c2c2" stroke-width="2.2" fill="none"/></svg>
<div class="t" style="left:221px;top:170.5px;font-family:'Liberation Serif',serif;font-style:italic;font-weight:bold;font-size:15px;color:#7a6a76;line-height:1">f<span style="font-size:11px">x</span></div>
<svg style="position:absolute;left:1007px;top:174px;overflow:visible;" width="10" height="6" viewBox="0 0 10 6"><path d="M1,1 L5,5 L9,1" stroke="#8e6a87" stroke-width="1.8" fill="none"/></svg>
<div style="position:absolute;left:1004px;top:201px;width:17px;height:473px;background:#e6e6e6"></div>
<div style="position:absolute;left:1007px;top:203px;width:14px;height:15px;background:#fff;border:1px solid #c6c6c6;box-sizing:border-box"></div>
<svg style="position:absolute;left:1010px;top:208px;overflow:visible;" width="8" height="5" viewBox="0 0 8 5"><path d="M0,4.5 H8 L4,0Z" fill="#8e6a87"/></svg>
<div style="position:absolute;left:1007px;top:218px;width:14px;height:421px;background:#fff;border:1px solid #c6c6c6;box-sizing:border-box"></div>
<div style="position:absolute;left:1007px;top:639px;width:14px;height:21px;background:#dcdcdc"></div>
<div style="position:absolute;left:1007px;top:660px;width:14px;height:14px;background:#fff;border:1px solid #c6c6c6;box-sizing:border-box"></div>
<svg style="position:absolute;left:1010px;top:665px;overflow:visible;" width="8" height="5" viewBox="0 0 8 5"><path d="M0,0 H8 L4,4.5Z" fill="#8e6a87"/></svg>
<div style="position:absolute;left:1003px;top:201px;width:1px;height:473px;background:#9b9b9b"></div>
<div style="position:absolute;left:1px;top:674px;width:1020px;height:28px;background:#e6e6e6"></div>
<div style="position:absolute;left:1px;top:702px;width:1020px;height:1px;background:#d4d4d4"></div>
<div style="position:absolute;left:1px;top:703px;width:1020px;height:20px;background:#f3f3f3"></div>
<div style="position:absolute;left:1px;top:674px;width:1003px;height:1px;background:#9b9b9b"></div>
<div style="position:absolute;left:99px;top:674px;width:107px;height:24px;background:#fff;border-left:1px solid #9b9b9b;border-right:1px solid #9b9b9b;box-sizing:border-box"></div>
<div style="position:absolute;left:99px;top:697px;width:107px;height:2px;background:#017541"></div>
<div class="t" style="left:111.60px;top:680.70px;font-size:13px;color:#017541;font-weight:bold;transform:scaleX(0.9723);">microexcel.ru</div>
<div class="t" style="left:7.80px;top:706.43px;font-size:11.3px;color:#262626;transform:scaleX(1.0088);">Готово</div>
<div class="t" style="left:976.60px;top:706.63px;font-size:11.3px;color:#262626;transform:scaleX(0.9115);">100 %</div>
<div style="position:absolute;left:631px;top:681px;width:15px;height:15px;background:#fff;border:1px solid #c6c6c6;box-sizing:border-box"></div>
<svg style="position:absolute;left:635px;top:684px;overflow:visible;" width="5" height="9" viewBox="0 0 5 9"><path d="M5,0 V9 L0,4.5Z" fill="#8e6a87"/></svg>
<div style="position:absolute;left:646px;top:681px;width:320px;height:15px;background:#fff;border:1px solid #c6c6c6;box-sizing:border-box"></div>
<div style="position:absolute;left:966px;top:681px;width:23px;height:15px;background:#dcdcdc"></div>
<div style="position:absolute;left:989px;top:681px;width:15px;height:15px;background:#fff;border:1px solid #c6c6c6;box-sizing:border-box"></div>
<svg style="position:absolute;left:994px;top:684px;overflow:visible;" width="5" height="9" viewBox="0 0 5 9"><path d="M0,0 V9 L5,4.5Z" fill="#8e6a87"/></svg>
<div style="position:absolute;left:614px;top:683px;width:2px;height:2px;background:#a0a0a0"></div>
<div style="position:absolute;left:614px;top:687px;width:2px;height:2px;background:#a0a0a0"></div>
<div style="position:absolute;left:614px;top:691px;width:2px;height:2px;background:#a0a0a0"></div>
<svg style="position:absolute;left:26px;top:684px;overflow:visible;" width="5" height="8" viewBox="0 0 5 8"><path d="M5,0 V8 L0,4Z" fill="#bdbdbd"/></svg>
<svg style="position:absolute;left:55px;top:684px;overflow:visible;" width="5" height="8" viewBox="0 0 5 8"><path d="M0,0 V8 L5,4Z" fill="#bdbdbd"/></svg>
<svg style="position:absolute;left:238px;top:680px;overflow:visible;" width="18" height="18" viewBox="0 0 18 18"><circle cx="8.8" cy="8" r="7.5" fill="none" stroke="#8a5f80" stroke-width="1.1"/><path d="M4.8,8 H12.8 M8.8,4 V12" stroke="#8a5f80" stroke-width="1.8"/></svg>
<svg style="position:absolute;left:71px;top:706px;overflow:visible;" width="14" height="14" viewBox="0 0 14 14"><circle cx="2.9" cy="2.8" r="2.9" fill="#4d4d4d"/><rect x="7.2" y="1.2" width="5.5" height="2.2" fill="#4d4d4d"/><rect x="11.9" y="1.2" width="1" height="11.8" fill="#4d4d4d"/><rect x="1.1" y="12" width="11.8" height="1" fill="#4d4d4d"/><rect x="1.1" y="7" width="1" height="6" fill="#4d4d4d"/><rect x="3.3" y="8" width="1.8" height="1" fill="#4d4d4d"/><rect x="3.3" y="10" width="1.8" height="1" fill="#4d4d4d"/><rect x="6.4" y="6" width="1.8" height="1" fill="#4d4d4d"/><rect x="6.4" y="8" width="1.8" height="1" fill="#4d4d4d"/><rect x="6.4" y="10" width="1.8" height="1" fill="#4d4d4d"/><rect x="9.5" y="6" width="1.8" height="1" fill="#4d4d4d"/><rect x="9.5" y="8" width="1.8" height="1" fill="#4d4d4d"/><rect x="9.5" y="10" width="1.8" height="1" fill="#4d4d4d"/></svg>
<div style="position:absolute;left:725px;top:703px;width:38px;height:20px;background:#c6c6c6"></div>
<svg style="position:absolute;left:737px;top:706px;overflow:visible;" width="14" height="14" viewBox="0 0 14 14"><path d="M0.5,0.5 H13.5 V13.5 H0.5Z M4.5,0.5 V13.5 M9.5,0.5 V13.5 M0.5,4.5 H13.5 M0.5,9.5 H13.5" fill="none" stroke="#8a5f80" stroke-width="1"/></svg>
<svg style="position:absolute;left:775px;top:706px;overflow:visible;" width="15" height="14" viewBox="0 0 15 14"><rect x="0.5" y="0.5" width="13" height="13" fill="none" stroke="#8a5f80" stroke-width="1"/><rect x="3.5" y="2.5" width="7" height="9" fill="none" stroke="#8a5f80" stroke-width="1"/><path d="M5,4.5 H9 M5,6.5 H9 M5,8.5 H9" stroke="#8a5f80" stroke-width="1"/></svg>
<svg style="position:absolute;left:813px;top:706px;overflow:visible;" width="15" height="14" viewBox="0 0 15 14"><rect x="0.5" y="0.5" width="13" height="13" fill="none" stroke="#8a5f80" stroke-width="1"/><path d="M1,7.5 H4.5 V0.5 M7.5,0.5 V7.5 H13.5" fill="none" stroke="#8a5f80" stroke-width="1"/></svg>
<div style="position:absolute;left:844px;top:712px;width:7px;height:2px;background:#444"></div>
<div style="position:absolute;left:854px;top:713px;width:100px;height:1px;background:#b0b0b0"></div>
<div style="position:absolute;left:902px;top:707px;width:5px;height:12px;background:#8a5f80"></div>
<svg style="position:absolute;left:957px;top:709px;overflow:visible;" width="9" height="9" viewBox="0 0 9 9"><path d="M0,4.5 H8 M4,0.5 V8.5" stroke="#8a5f80" stroke-width="1.7"/></svg>
<div style="position:absolute;left:0px;top:62px;width:1px;height:662px;background:#017541"></div>
<div style="position:absolute;left:1021px;top:62px;width:1px;height:662px;background:#017541"></div>
<div style="position:absolute;left:0px;top:722px;width:1022px;height:2px;background:#017541"></div>
<div style="position:absolute;left:280px;top:134px;width:222px;height:148px;background:#fff;border:1px solid #c6c6c6;box-sizing:border-box;box-shadow:1px 1px 2px rgba(0,0,0,.15)"></div>
<div style="position:absolute;left:282px;top:137px;width:220px;height:23px;background:#c5c5c5"></div>
<div class="t" style="left:314.30px;top:142.14px;font-size:12px;color:#444;transform:scaleX(0.9763);">Статистические</div>
<svg style="position:absolute;left:488.75px;top:143.5px;overflow:visible;" width="4.5" height="8" viewBox="0 0 4.5 8"><path d="M0,0 V8 L4.5,4.0Z" fill="#8e6a87"/></svg>
<div class="t" style="left:314.30px;top:166.14px;font-size:12px;color:#444;transform:scaleX(1.0048);">Инженерные</div>
<svg style="position:absolute;left:488.75px;top:167.5px;overflow:visible;" width="4.5" height="8" viewBox="0 0 4.5 8"><path d="M0,0 V8 L4.5,4.0Z" fill="#8e6a87"/></svg>
<div class="t" style="left:314.30px;top:190.14px;font-size:12px;color:#444;transform:scaleX(0.9945);">Аналитические</div>
<svg style="position:absolute;left:488.75px;top:191.5px;overflow:visible;" width="4.5" height="8" viewBox="0 0 4.5 8"><path d="M0,0 V8 L4.5,4.0Z" fill="#8e6a87"/></svg>
<div class="t" style="left:314.30px;top:214.14px;font-size:12px;color:#444;transform:scaleX(0.9931);">Проверка свойств и значений</div>
<svg style="position:absolute;left:488.75px;top:215.5px;overflow:visible;" width="4.5" height="8" viewBox="0 0 4.5 8"><path d="M0,0 V8 L4.5,4.0Z" fill="#8e6a87"/></svg>
<div class="t" style="left:314.30px;top:238.14px;font-size:12px;color:#444;transform:scaleX(0.9877);">Совместимость</div>
<svg style="position:absolute;left:488.75px;top:239.5px;overflow:visible;" width="4.5" height="8" viewBox="0 0 4.5 8"><path d="M0,0 V8 L4.5,4.0Z" fill="#8e6a87"/></svg>
<div class="t" style="left:314.30px;top:262.14px;font-size:12px;color:#444;transform:scaleX(0.9722);">Интернет</div>
<svg style="position:absolute;left:488.75px;top:263.5px;overflow:visible;" width="4.5" height="8" viewBox="0 0 4.5 8"><path d="M0,0 V8 L4.5,4.0Z" fill="#8e6a87"/></svg>
<svg style="position:absolute;left:286px;top:140px;overflow:visible;" width="16" height="16" viewBox="0 0 16 16"><path d="M0,1 Q0,0 1,0 H1.6 V14 H0.8 Q0,14 0,13.2Z" fill="#1f8ba3"/><rect x="2.6" y="0" width="10.4" height="13" fill="#1f8ba3"/><rect x="1.6" y="14" width="8" height="1" fill="#1f8ba3"/><path d="M3.6,14.7 L8.1,6.4 L10.9,13.3 L14.7,9.1" stroke="#fff" stroke-width="2.6" fill="none"/><path d="M3.6,14.7 L8.1,6.4 L10.9,13.3 L14.7,9.1" stroke="#6d5a6a" stroke-width="1.1" fill="none"/></svg>
<svg style="position:absolute;left:286px;top:164px;overflow:visible;" width="18" height="16" viewBox="0 0 18 16"><path d="M0,1 Q0,0 1,0 H1.6 V14 H0.8 Q0,14 0,13.2Z" fill="#f56f1f"/><rect x="2.6" y="0" width="8" height="13" fill="#f56f1f"/><rect x="1.6" y="14" width="8" height="1" fill="#f56f1f"/><path d="M12,1.5 V5 M10.8,9 L8.4,14.8 M13.2,9 L15.7,14.8" stroke="#fff" stroke-width="2.8" fill="none"/><circle cx="12" cy="7" r="3.2" fill="#fff"/><path d="M12,1.5 V4.6 M10.9,9 L8.6,14.8 M13.1,9 L15.5,14.8" stroke="#6d5a6a" stroke-width="1.2" fill="none"/><circle cx="12" cy="7" r="2.1" fill="none" stroke="#6d5a6a" stroke-width="1.2"/></svg>
<svg style="position:absolute;left:286px;top:188px;overflow:visible;" width="16" height="16" viewBox="0 0 16 16"><path d="M0,1 Q0,0 1,0 H1.6 V14 H0.8 Q0,14 0,13.2Z" fill="#8a5f80"/><rect x="2.6" y="0" width="10.4" height="13" fill="#8a5f80"/><rect x="1.6" y="14" width="8" height="1" fill="#8a5f80"/><rect x="4.0" y="2.5" width="1" height="1" fill="#c9aec2"/><rect x="4.0" y="5.1" width="1" height="1" fill="#c9aec2"/><rect x="4.0" y="7.7" width="1" height="1" fill="#c9aec2"/><rect x="6.6" y="2.5" width="1" height="1" fill="#c9aec2"/><rect x="6.6" y="5.1" width="1" height="1" fill="#c9aec2"/><rect x="6.6" y="7.7" width="1" height="1" fill="#c9aec2"/><rect x="9.2" y="2.5" width="1" height="1" fill="#c9aec2"/><rect x="9.2" y="5.1" width="1" height="1" fill="#c9aec2"/><rect x="9.2" y="7.7" width="1" height="1" fill="#c9aec2"/><path d="M9,10 L13,8 L17,10 V13.5 L13,15.5 L9,13.5Z" fill="#fff" stroke="#fff" stroke-width="1.5"/><path d="M9,10 L13,8 L17,10 V13.5 L13,15.5 L9,13.5Z" fill="#f56f1f"/><ellipse cx="13" cy="10" rx="2.2" ry="1" fill="#fde"/></svg>
<svg style="position:absolute;left:286px;top:212px;overflow:visible;" width="16" height="16" viewBox="0 0 16 16"><path d="M0,1 Q0,0 1,0 H1.6 V14 H0.8 Q0,14 0,13.2Z" fill="#f5aa70"/><rect x="2.6" y="0" width="10.4" height="13" fill="#f5aa70"/><rect x="1.6" y="14" width="8" height="1" fill="#f5aa70"/><circle cx="11" cy="10" r="6" fill="#fff"/><circle cx="11" cy="10" r="5" fill="#1f8ba3"/><rect x="10.3" y="8.7" width="1.5" height="4" fill="#fff"/><rect x="10.3" y="6.5" width="1.5" height="1.4" fill="#fff"/></svg>
<svg style="position:absolute;left:286px;top:236px;overflow:visible;" width="16" height="16" viewBox="0 0 16 16"><path d="M0,1 Q0,0 1,0 H1.6 V14 H0.8 Q0,14 0,13.2Z" fill="#8a5f80"/><rect x="2.6" y="0" width="10.4" height="13" fill="#8a5f80"/><rect x="1.6" y="14" width="8" height="1" fill="#8a5f80"/><rect x="4.0" y="2.5" width="1" height="1" fill="#c9aec2"/><rect x="4.0" y="5.1" width="1" height="1" fill="#c9aec2"/><rect x="4.0" y="7.7" width="1" height="1" fill="#c9aec2"/><rect x="6.6" y="2.5" width="1" height="1" fill="#c9aec2"/><rect x="6.6" y="5.1" width="1" height="1" fill="#c9aec2"/><rect x="6.6" y="7.7" width="1" height="1" fill="#c9aec2"/><rect x="9.2" y="2.5" width="1" height="1" fill="#c9aec2"/><rect x="9.2" y="5.1" width="1" height="1" fill="#c9aec2"/><rect x="9.2" y="7.7" width="1" height="1" fill="#c9aec2"/><path d="M11.5,7 L16.5,15.5 H6.5Z" fill="#fff" stroke="#fff" stroke-width="1.5"/><path d="M11.5,8 L15.8,15.2 H7.2Z" fill="#f5aa70"/><path d="M11.5,10.5 V13 M11.5,14 V14.8" stroke="#444" stroke-width="1"/></svg>
<svg style="position:absolute;left:286px;top:260px;overflow:visible;" width="16" height="16" viewBox="0 0 16 16"><path d="M0,1 Q0,0 1,0 H1.6 V14 H0.8 Q0,14 0,13.2Z" fill="#f56f1f"/><rect x="2.6" y="0" width="10.4" height="13" fill="#f56f1f"/><rect x="1.6" y="14" width="8" height="1" fill="#f56f1f"/><circle cx="11.6" cy="11.4" r="5.6" fill="#fff"/><circle cx="11.6" cy="11.4" r="4.7" fill="#9a9a9a"/><path d="M11.6,6.7 L14.2,7.6 L16.3,11.4 L14.2,15.2 L11.6,16.1 L9,15.2 L6.9,11.4 L9,7.6Z" fill="#1f8ba3"/><rect x="9.3" y="10.5" width="4.6" height="1.8" fill="#fff"/><path d="M11.6,8 L12.8,9.4 H10.4Z M11.6,14.8 L12.8,13.4 H10.4Z" fill="#fff"/></svg>
<div style="position:absolute;left:314px;top:154px;width:7px;height:1px;background:#444"></div>
<div style="position:absolute;left:314px;top:178px;width:7px;height:1px;background:#444"></div>
<div style="position:absolute;left:314px;top:202px;width:8px;height:1px;background:#444"></div>
<div style="position:absolute;left:417px;top:226px;width:7px;height:1px;background:#444"></div>
<div style="position:absolute;left:334px;top:250px;width:9px;height:1px;background:#444"></div>
<div style="position:absolute;left:323px;top:274px;width:8px;height:1px;background:#444"></div>
<div style="position:absolute;left:502px;top:135px;width:229px;height:487px;background:#fff;border:1px solid #c6c6c6;box-sizing:border-box;box-shadow:2px 2px 3px rgba(0,0,0,.12)"></div>
<div class="t" style="left:536.20px;top:144.14px;font-size:12px;color:#4a4a4a;transform:scaleX(0.9546);">ПРОЦЕНТИЛЬ.ВКЛ</div>
<div class="t" style="left:536.20px;top:168.14px;font-size:12px;color:#4a4a4a;transform:scaleX(0.9700);">ПРОЦЕНТИЛЬ.ИСКЛ</div>
<div class="t" style="left:536.20px;top:192.14px;font-size:12px;color:#4a4a4a;transform:scaleX(0.9700);">ПРОЦЕНТРАНГ.ВКЛ</div>
<div class="t" style="left:536.20px;top:216.14px;font-size:12px;color:#4a4a4a;transform:scaleX(0.9700);">ПРОЦЕНТРАНГ.ИСКЛ</div>
<div class="t" style="left:536.20px;top:240.14px;font-size:12px;color:#4a4a4a;transform:scaleX(0.9700);">ПУАССОН.РАСП</div>
<div class="t" style="left:536.20px;top:264.14px;font-size:12px;color:#4a4a4a;transform:scaleX(0.9700);">РАНГ.РВ</div>
<div class="t" style="left:536.20px;top:288.14px;font-size:12px;color:#4a4a4a;transform:scaleX(0.9700);">РАНГ.СР</div>
<div class="t" style="left:536.20px;top:312.14px;font-size:12px;color:#4a4a4a;transform:scaleX(0.9700);">РОСТ</div>
<div class="t" style="left:536.20px;top:336.14px;font-size:12px;color:#4a4a4a;transform:scaleX(0.9700);">СКОС</div>
<div class="t" style="left:536.20px;top:360.14px;font-size:12px;color:#4a4a4a;transform:scaleX(0.9700);">СКОС.Г</div>
<div class="t" style="left:536.20px;top:384.14px;font-size:12px;color:#4a4a4a;transform:scaleX(0.9700);">СРГАРМ</div>
<div class="t" style="left:536.20px;top:408.14px;font-size:12px;color:#4a4a4a;transform:scaleX(0.9700);">СРГЕОМ</div>
<div class="t" style="left:536.20px;top:432.14px;font-size:12px;color:#4a4a4a;transform:scaleX(0.9665);">СРЗНАЧ</div>
<div class="t" style="left:536.20px;top:456.14px;font-size:12px;color:#4a4a4a;transform:scaleX(0.9700);">СРЗНАЧА</div>
<div class="t" style="left:536.20px;top:480.14px;font-size:12px;color:#4a4a4a;transform:scaleX(0.9700);">СРЗНАЧЕСЛИ</div>
<div class="t" style="left:536.20px;top:504.14px;font-size:12px;color:#4a4a4a;transform:scaleX(0.9700);">СРЗНАЧЕСЛИМН</div>
<div class="t" style="left:536.20px;top:528.14px;font-size:12px;color:#4a4a4a;transform:scaleX(0.9700);">СРОТКЛ</div>
<div class="t" style="left:536.20px;top:552.14px;font-size:12px;color:#4a4a4a;transform:scaleX(0.9700);">СТАНДОТКЛОН.В</div>
<div class="t" style="left:536.20px;top:576.14px;font-size:12px;color:#4a4a4a;transform:scaleX(0.9762);">СТАНДОТКЛОН.Г</div>
<div style="position:absolute;left:504px;top:594px;width:224px;height:1px;background:#e1e1e1"></div>
<div class="t" style="left:536.20px;top:602.24px;font-size:12px;color:#444;transform:scaleX(0.9712);">Вставить функцию...</div>
<div style="position:absolute;left:587px;top:614px;width:9px;height:1px;background:#444"></div>
<div class="t" style="left:509px;top:598px;font-family:'Liberation Serif',serif;font-style:italic;font-size:17px;color:#555;line-height:1">fx</div>
<div style="position:absolute;left:713px;top:140px;width:15px;height:452px;background:#e6e6e6"></div>
<div style="position:absolute;left:713px;top:140px;width:15px;height:15px;background:#fff;border:1px solid #c6c6c6;box-sizing:border-box"></div>
<svg style="position:absolute;left:716px;top:145px;overflow:visible;" width="9" height="5" viewBox="0 0 9 5"><path d="M0,4.5 H9 L4.5,0Z" fill="#8e6a87"/></svg>
<div style="position:absolute;left:713px;top:401px;width:15px;height:72px;background:#fff;border:1px solid #c6c6c6;box-sizing:border-box"></div>
<div style="position:absolute;left:713px;top:577px;width:15px;height:15px;background:#fff;border:1px solid #c6c6c6;box-sizing:border-box"></div>
<svg style="position:absolute;left:716px;top:582px;overflow:visible;" width="9" height="5" viewBox="0 0 9 5"><path d="M0,0 H9 L4.5,4.5Z" fill="#8e6a87"/></svg>
<div style="position:absolute;left:330px;top:31px;width:82px;height:29px;border:3px solid #f00;border-radius:9px;box-sizing:border-box"></div>
<div style="position:absolute;left:276px;top:108px;width:40px;height:24px;border:3px solid #f00;border-radius:10px;box-sizing:border-box"></div>
<div style="position:absolute;left:283px;top:135px;width:218px;height:27px;border:3px solid #f00;border-radius:10px;box-sizing:border-box"></div>
<div style="position:absolute;left:504px;top:426px;width:207px;height:24px;border:3px solid #f00;border-radius:10px;box-sizing:border-box"></div>
<div style="position:absolute;left:82px;top:313px;width:78px;height:36px;border:3px solid #f00;border-radius:9px;box-sizing:border-box"></div>
</body></html>
